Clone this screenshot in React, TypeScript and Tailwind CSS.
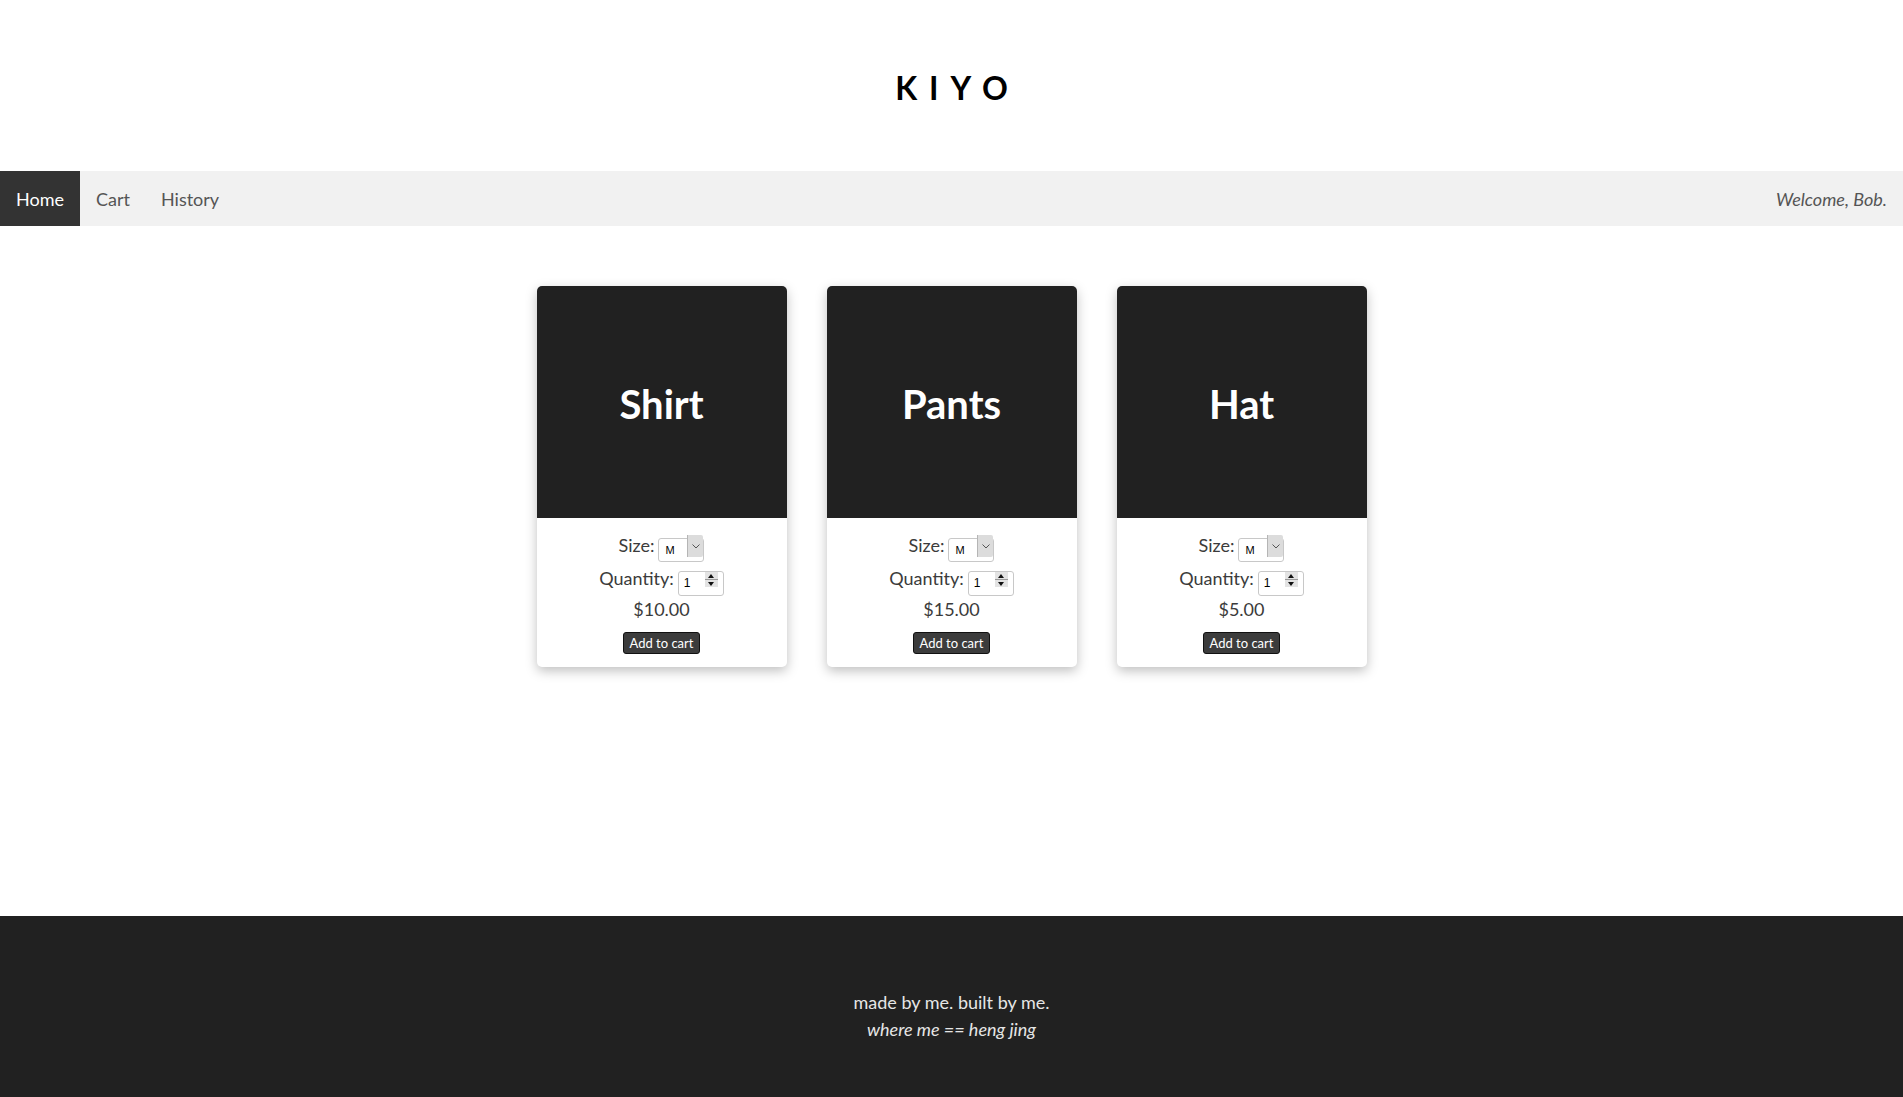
import { useState } from "react";

const products = [
  { name: "Shirt", price: "$10.00" },
  { name: "Pants", price: "$15.00" },
  { name: "Hat", price: "$5.00" },
];

const ProductCard = ({ name, price }: { name: string; price: string }) => {
  const [size, setSize] = useState("M");
  const [qty, setQty] = useState(1);

  return (
    <div className="w-[250px] rounded-[5px] bg-white shadow-[0_4px_12px_rgba(0,0,0,0.25)] overflow-hidden">
      <div className="h-[232px] bg-[#212121] flex items-center justify-center">
        <h2 className="text-white text-[40px] font-bold mt-[4px]">{name}</h2>
      </div>
      <div className="flex flex-col items-center pt-4 pb-[13px] text-[18px] text-[#3b3b3b]">
        <div className="flex items-center h-6 gap-1">
          <span className="-mt-[2px]">Size:</span>
          <div className="relative w-[46px] h-6">
            <select
              value={size}
              onChange={(e) => setSize(e.target.value)}
              className="appearance-none w-full h-full border border-[#c8c8c8] rounded-[3px] bg-white pl-[6px] text-[11px] text-black font-['Liberation_Sans',sans-serif]"
            >
              <option>S</option>
              <option>M</option>
              <option>L</option>
            </select>
            <div className="absolute right-[1px] top-[1px] bottom-[1px] w-[16px] bg-[#dcdcdc] border-l border-[#b5b5b5] rounded-r-[2px] flex items-center justify-center pointer-events-none">
              <svg width="8" height="5" viewBox="0 0 8 5">
                <path d="M0.5 0.5 L4 4 L7.5 0.5" fill="none" stroke="#555" strokeWidth="1" />
              </svg>
            </div>
          </div>
        </div>
        <div className="flex items-center h-[25px] gap-1 mt-[9px]">
          <span className="-mt-[2px]">Quantity:</span>
          <div className="relative w-[46px] h-[25px]">
            <input
              type="number"
              value={qty}
              min={1}
              onChange={(e) => setQty(Number(e.target.value))}
              className="w-full h-full border border-[#c8c8c8] rounded-[3px] bg-white pl-[5px] text-[12px] text-black font-['Liberation_Sans',sans-serif] [appearance:textfield] [&::-webkit-inner-spin-button]:appearance-none"
            />
            <div className="absolute right-[6px] top-[5px] w-[13px] h-[15px] flex flex-col pointer-events-none">
              <div className="flex-1 bg-[#e3e3e3] border-b border-[#999] flex items-center justify-center">
                <svg width="6" height="4" viewBox="0 0 6 4">
                  <path d="M0 4 L3 0 L6 4 Z" fill="#111" />
                </svg>
              </div>
              <div className="flex-1 bg-[#e3e3e3] flex items-center justify-center">
                <svg width="6" height="4" viewBox="0 0 6 4">
                  <path d="M0 0 L3 4 L6 0 Z" fill="#111" />
                </svg>
              </div>
            </div>
          </div>
        </div>
        <div className="h-[26px] mt-[4px] flex items-center">{price}</div>
        <button className="mt-[10px] h-[22px] px-[6px] bg-[#3c3c3c] text-white text-[13px] rounded-[3px] border border-[#111] leading-none">
          Add to cart
        </button>
      </div>
    </div>
  );
};

export default function App() {
  return (
    <div className="min-h-screen bg-white font-['Lato','Open_Sans',sans-serif]">
      <header className="h-[171px] flex items-center justify-center">
        <h1 className="text-[32px] font-bold tracking-[12px] pl-[12px] mt-[4px] text-black">KIYO</h1>
      </header>
      <nav className="h-[55px] bg-[#f1f1f1] flex items-stretch text-[18px]">
        <a className="bg-[#333] text-white flex items-center w-[80px] justify-center pt-[2px]">Home</a>
        <a className="text-[#555] pl-[16px] pr-[15px] flex items-center pt-[2px]">Cart</a>
        <a className="text-[#555] px-[16px] flex items-center pt-[2px]">History</a>
        <div className="ml-auto pr-[16px] flex items-center italic text-[#555] pt-[2px]">Welcome, Bob.</div>
      </nav>
      <main className="h-[690px] pt-[60px] flex justify-center gap-[40px]">
        {products.map((p) => (
          <div key={p.name}>
            <ProductCard name={p.name} price={p.price} />
          </div>
        ))}
      </main>
      <footer className="h-[181px] bg-[#212121] flex flex-col items-center justify-center text-[#e6e6e6] text-[18px] leading-[27px]">
        <p className="mt-[18px]">made by me. built by me.</p>
        <p className="italic">where me == heng jing</p>
      </footer>
    </div>
  );
}
